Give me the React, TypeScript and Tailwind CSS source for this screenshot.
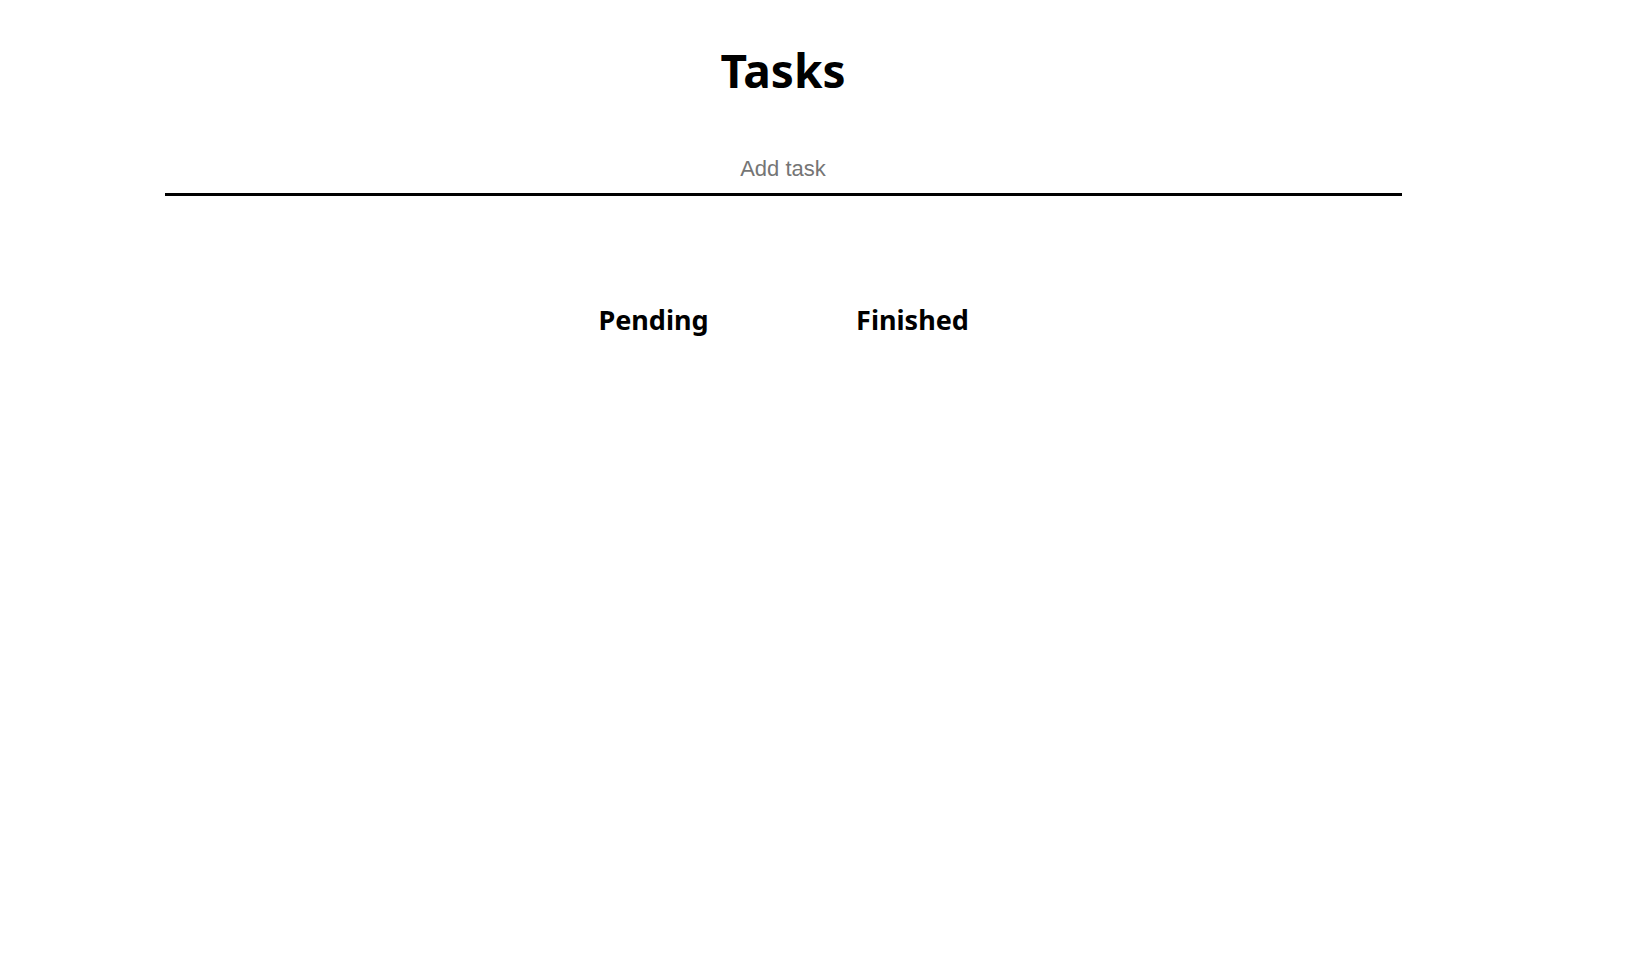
export default function App() {
  return (
    <div className="min-h-screen bg-white">
      <div className="flex w-[1566px] flex-col items-center" style={{ fontFamily: '"Noto Sans", sans-serif' }}>
        <h1 className="mt-[38px] text-[46px] font-bold leading-[64px] text-black">Tasks</h1>
        <input
          className="mt-[50px] w-[1237px] border-b-[3px] border-black bg-transparent pb-[8px] text-center text-[22px] text-black outline-none placeholder:text-[#757575]"
          style={{ fontFamily: '"Liberation Sans", Arial, sans-serif' }}
          placeholder="Add task"
        />
        <div className="mt-[104px] grid grid-cols-2">
          <h2 className="w-[259px] text-center text-[27px] font-bold text-black">Pending</h2>
          <h2 className="w-[259px] text-center text-[27px] font-bold text-black">Finished</h2>
        </div>
      </div>
    </div>
  );
}
